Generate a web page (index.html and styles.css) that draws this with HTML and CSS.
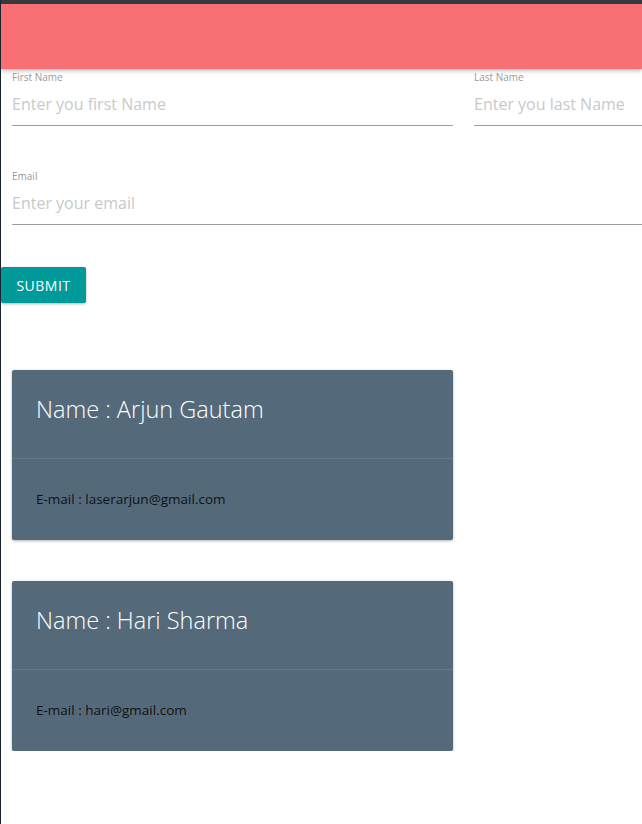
FILE: index.html
```html
<!DOCTYPE html>
<html>
<head>
<meta charset="utf-8">
<link rel="stylesheet" href="styles.css">
</head>
<body>
<div class="topstrip"></div>
<header class="appbar"></header>
<main class="page">
  <form class="form">
    <div class="row">
      <label class="field half">
        <span class="label">First Name</span>
        <input class="input" type="text" placeholder="Enter you first Name">
      </label>
      <label class="field half">
        <span class="label">Last Name</span>
        <input class="input" type="text" placeholder="Enter you last Name">
      </label>
    </div>
    <label class="field full">
      <span class="label">Email</span>
      <input class="input" type="text" placeholder="Enter your email">
    </label>
  </form>
  <button class="submit" type="button">Submit</button>
  <section class="cards">
    <article class="card">
      <div class="card-head">Name : Arjun Gautam</div>
      <div class="card-body">E-mail : laserarjun@gmail.com</div>
    </article>
    <article class="card">
      <div class="card-head">Name : Hari Sharma</div>
      <div class="card-body">E-mail : hari@gmail.com</div>
    </article>
  </section>
</main>
</body>
</html>
```
FILE: styles.css
```css
html, body {
  margin: 0;
  padding: 0;
  overflow: hidden;
}
body {
  width: 642px;
  height: 824px;
  box-sizing: border-box;
  border-left: 1px solid #1b2433;
  background: #ffffff;
  font-family: "Open Sans", "Noto Sans", sans-serif;
}
.topstrip {
  height: 4px;
  background: #3a3a3e;
}
.appbar {
  height: 65px;
  background: #f87074;
  box-shadow: 0 2px 4px rgba(0, 0, 0, 0.25);
  position: relative;
  z-index: 1;
}
.page {
  padding-left: 0;
  overflow: hidden;
}
.form {
  padding-left: 11px;
  padding-top: 2px;
}
.row {
  display: flex;
  gap: 21px;
  width: 1000px;
}
.field {
  display: flex;
  flex-direction: column;
}
.half {
  width: 441px;
  flex: none;
}
.full {
  width: 640px;
  margin-top: 44px;
}
.label {
  font-size: 10px;
  color: #9a9a9a;
  line-height: 12px;
}
.input {
  border: none;
  border-bottom: 1px solid #9e9e9e;
  outline: none;
  padding: 0;
  margin-top: 0;
  height: 42px;
  font-family: inherit;
  font-size: 16px;
  color: #333;
  background: transparent;
}
.input::placeholder {
  color: #c9c9c9;
}
.submit {
  display: block;
  margin-top: 42px;
  margin-left: 0;
  width: 85px;
  height: 36px;
  border: none;
  border-radius: 2px;
  background: #009a9a;
  color: #ffffff;
  font-family: inherit;
  font-size: 14px;
  letter-spacing: 0.5px;
  text-transform: uppercase;
  box-shadow: 0 1px 3px rgba(0, 0, 0, 0.3);
  padding: 0;
}
.cards {
  margin-top: 67px;
  padding-left: 11px;
  display: flex;
  flex-direction: column;
  gap: 41px;
}
.card {
  width: 441px;
  height: 170px;
  background: #546a7b;
  border-radius: 2px;
  box-shadow: 0 1px 3px rgba(0, 0, 0, 0.3);
  display: flex;
  flex-direction: column;
}
.card-head {
  height: 89px;
  flex: none;
  box-sizing: border-box;
  padding: 24px 24px 0 24px;
  border-bottom: 1px solid rgba(255, 255, 255, 0.1);
  color: #ffffff;
  font-size: 23.5px;
  font-weight: 300;
  line-height: 30px;
}
.card-body {
  flex: 1;
  display: flex;
  align-items: center;
  padding: 0 24px 1px;
  font-size: 13.5px;
  color: #111;
}
```
